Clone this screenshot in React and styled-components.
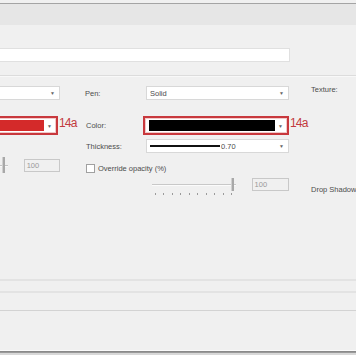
import React from "react";
import styled, { createGlobalStyle } from "styled-components";

const GlobalStyle = createGlobalStyle`
  html, body {
    margin: 0;
    padding: 0;
    background: #f0f0f0;
    overflow: hidden;
  }
  body {
    font-family: "Liberation Sans", Arial, sans-serif;
  }
`;

const Page = styled.div`
  width: 356px;
  height: 355px;
  display: flex;
  flex-direction: column;
  background: #f0f0f0;
  color: #555;
  font-size: 7.5px;
  overflow: hidden;
`;

const TitleStrip = styled.div`
  margin-top: 3px;
  height: 21px;
  border-top: 1px solid #a4a4a4;
  background: #e6e6e6;
  flex-shrink: 0;
`;

const NameRow = styled.div`
  padding: 23px 0 13px;
  border-bottom: 1px solid #dcdcdc;
  box-shadow: 0 1px 0 #f8f8f8;
`;

const NameInput = styled.div`
  margin-left: -2px;
  width: 290px;
  height: 12px;
  background: #fff;
  border: 1px solid #e0e0e0;
`;

const Form = styled.div`
  flex: 1;
`;

const FormRow = styled.div`
  display: grid;
  grid-template-columns: 60px 26px 60px 143px 22px 45px;
  height: ${(p) => p.$h}px;
  margin-top: ${(p) => p.$top}px;
  align-items: center;
`;

const Label = styled.div`
  white-space: nowrap;
  color: #4c4c4c;
  font-size: 7.5px;
  margin-left: ${(p) => p.$ml || 0}px;
  margin-top: ${(p) => p.$mt || 0}px;
`;

const Select = styled.div`
  height: 12px;
  background: #fff;
  border: 1px solid #d8d8d8;
  display: flex;
  align-items: center;
  padding: 0 3px;
  margin-left: ${(p) => p.$ml || 0}px;
  color: #4c4c4c;
`;

const Arrow = styled.span`
  margin-left: auto;
  font-size: 5px;
  color: #666;
  padding-right: 1px;
`;

const Highlight = styled.div`
  box-sizing: border-box;
  height: 19px;
  border: 2px solid #c8383d;
  margin-left: ${(p) => p.$ml}px;
  width: ${(p) => p.$w}px;
  display: flex;
`;

const SwatchSelect = styled.div`
  flex: 1;
  background: #fff;
  border: 1px solid #f1c9c9;
  display: flex;
  align-items: center;
  padding: 0 2px 0 3px;
`;

const Swatch = styled.div`
  height: 11px;
  flex: 1;
  background: ${(p) => p.$color};
  margin-right: 3px;
`;

const Note = styled.div`
  color: #c23a3e;
  font-size: 12px;
  letter-spacing: -0.8px;
  margin-left: ${(p) => p.$ml}px;
  line-height: 1;
  align-self: start;
  margin-top: 1px;
`;

const LineSample = styled.div`
  width: 70px;
  height: 2px;
  background: #111;
`;

const NumBox = styled.div`
  width: 34px;
  height: 11px;
  border: 1px solid #c8c8c8;
  background: #f0f0f0;
  color: #999;
  display: flex;
  align-items: center;
  padding-left: 2px;
  box-sizing: content-box;
  margin-left: ${(p) => p.$ml || 0}px;
`;

const LeftCell = styled.div`
  display: flex;
  align-items: center;
  height: 100%;
`;

const MiniSlider = styled.div`
  position: relative;
  width: 8px;
  height: 16px;
  display: flex;
  align-items: center;
`;

const Track = styled.div`
  height: 1px;
  width: 100%;
  background: #c4c4c4;
  box-shadow: 0 1px 0 #fafafa;
`;

const Thumb = styled.div`
  position: absolute;
  top: 0;
  left: ${(p) => p.$left}px;
  width: 3px;
  height: ${(p) => p.$h}px;
  background: #a8a8a8;
  border-left: 1px solid #d0d0d0;
  box-sizing: border-box;
`;

const CheckRow = styled.div`
  grid-column: 3 / span 3;
  display: flex;
  align-items: center;
  gap: 3px;
  align-self: end;
`;

const Check = styled.div`
  width: 7px;
  height: 7px;
  background: #fff;
  border: 1px solid #a0a0a0;
`;

const SliderCell = styled.div`
  display: flex;
  align-items: flex-start;
  height: 100%;
  padding-left: 6px;
`;

const Slider = styled.div`
  position: relative;
  width: 85px;
  height: 18px;
`;

const SliderTrack = styled.div`
  position: absolute;
  left: 0;
  right: 0;
  top: 6px;
  height: 1px;
  background: #c8c8c8;
  box-shadow: 0 1px 0 #fbfbfb;
`;

const Ticks = styled.div`
  position: absolute;
  left: 3px;
  top: 15px;
  width: 77px;
  display: flex;
  justify-content: space-between;
`;

const Tick = styled.span`
  width: 1px;
  height: 2px;
  background: #9a9a9a;
`;

const Footer = styled.div`
  flex-shrink: 0;
  display: flex;
  flex-direction: column;
`;

const Band = styled.div`
  box-sizing: border-box;
  height: ${(p) => p.$h}px;
  border-top: ${(p) => p.$line};
`;

const BottomEdge = styled.div`
  box-sizing: border-box;
  height: 5px;
  border-top: 1px solid #fafafa;
  box-shadow: inset 0 1px 0 #8a8a8a, inset 0 2px 0 #9a9a9a;
  background: #d8d8d8;
`;

export default function App() {
  return (
    <Page>
      <GlobalStyle />
      <TitleStrip />
      <NameRow>
        <NameInput />
      </NameRow>
      <Form>
        <FormRow $top={10} $h={14}>
          <Select $ml={-3}>
            <Arrow>▼</Arrow>
          </Select>
          <span />
          <Label $ml={-1}>Pen:</Label>
          <Select>
            Solid
            <Arrow>▼</Arrow>
          </Select>
          <span />
          <Label $mt={-8}>Texture:</Label>
        </FormRow>

        <FormRow $top={16} $h={19}>
          <Highlight $ml={-8} $w={66}>
            <SwatchSelect>
              <Swatch $color="#d42a2a" />
              <Arrow>▼</Arrow>
            </SwatchSelect>
          </Highlight>
          <Note $ml={-1}>14a</Note>
          <Label>Color:</Label>
          <Highlight $ml={-3} $w={146}>
            <SwatchSelect>
              <Swatch $color="#000" />
              <Arrow>▼</Arrow>
            </SwatchSelect>
          </Highlight>
          <Note $ml={1}>14a</Note>
          <span />
        </FormRow>

        <FormRow $top={4} $h={14}>
          <span />
          <span />
          <Label>Thickness:</Label>
          <Select>
            <LineSample />
            <span style={{ marginLeft: 1 }}>0.70</span>
            <Arrow>▼</Arrow>
          </Select>
        </FormRow>

        <FormRow $top={4} $h={15}>
          <LeftCell>
            <MiniSlider>
              <Track />
              <Thumb $left={2} $h={16} />
            </MiniSlider>
            <NumBox $ml={16}>100</NumBox>
          </LeftCell>
          <span />
          <CheckRow>
            <Check />
            <Label>Override opacity (%)</Label>
          </CheckRow>
        </FormRow>

        <FormRow $top={6} $h={18}>
          <span />
          <span />
          <span />
          <SliderCell>
            <Slider>
              <SliderTrack />
              <Thumb $left={79} $h={13} />
              <Ticks>
                {Array.from({ length: 10 }).map((_, i) => (
                  <Tick key={i} />
                ))}
              </Ticks>
            </Slider>
            <NumBox $ml={16}>100</NumBox>
          </SliderCell>
          <span />
          <Label $mt={5}>Drop Shadow</Label>
        </FormRow>
      </Form>
      <Footer>
        <Band $h={12} $line="2px solid #e3e3e3" />
        <Band $h={19} $line="2px solid #e3e3e3" />
        <Band $h={40} $line="1px solid #d3d3d3" />
        <BottomEdge />
      </Footer>
    </Page>
  );
}
